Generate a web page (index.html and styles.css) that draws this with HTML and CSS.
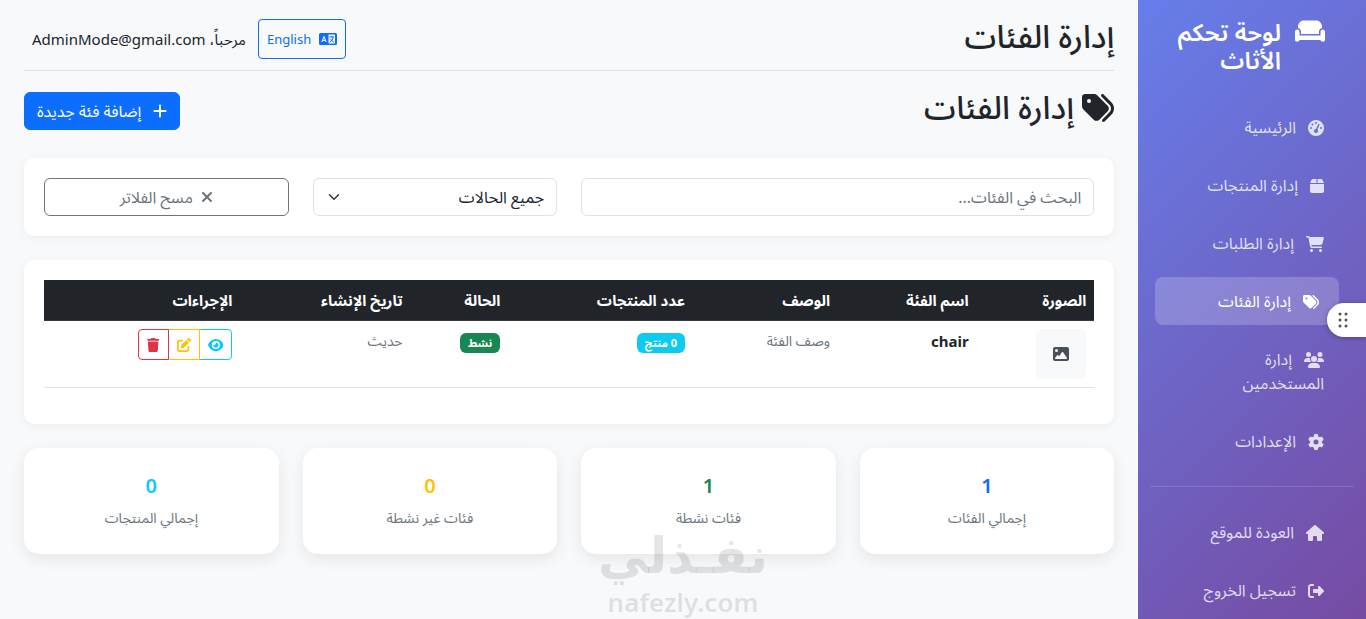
FILE: index.html
```html
<!DOCTYPE html>
<html lang="ar" dir="rtl">
<head>
<meta charset="utf-8">
<meta name="viewport" content="width=device-width, initial-scale=1">
<title>إدارة الفئات</title>
<link rel="stylesheet" href="styles.css">
</head>
<body>
<svg class="sprite" aria-hidden="true">
  <symbol id="tags" viewBox="0 0 512 512"><path d="M345 39.1L472.8 168.4c52.4 53 52.4 138.2 0 191.2L360.8 472.9c-9.3 9.4-24.5 9.5-33.9 .2s-9.5-24.5-.2-33.9L438.6 325.9c33.9-34.3 33.9-89.4 0-123.7L310.9 72.9c-9.3-9.4-9.2-24.6 .2-33.9s24.6-9.2 33.9 .2zM0 229.5V80C0 53.5 21.5 32 48 32H197.5c17 0 33.3 6.7 45.3 18.7l168 168c25 25 25 65.5 0 90.5L277.3 442.7c-25 25-65.5 25-90.5 0l-168-168C6.7 262.7 0 246.5 0 229.5zM144 144a32 32 0 1 0 -64 0 32 32 0 1 0 64 0z"/></symbol>
</svg>
<div class="layout">
  <aside class="sidebar">
    <div class="brand">
      <svg class="brand-icon" viewBox="0 0 640 512" aria-hidden="true"><path d="M64 160C64 89.3 121.3 32 192 32H448c70.7 0 128 57.3 128 128v33.6c-36.5 7.4-64 39.7-64 78.4v48H128V272c0-38.7-27.5-71-64-78.4V160zM544 272c0-20.9 13.4-38.7 32-45.3c5-1.8 10.4-2.7 16-2.7c26.5 0 48 21.5 48 48V448c0 17.7-14.3 32-32 32H576c-17.7 0-32-14.3-32-32H96c0 17.7-14.3 32-32 32H32c-17.7 0-32-14.3-32-32V272c0-26.5 21.5-48 48-48c5.6 0 11 1 16 2.7c18.6 6.6 32 24.4 32 45.3v48 32h32H512h32V320 272z"/></svg>
      <span>لوحة تحكم الأثاث</span>
    </div>
    <nav class="nav">
      <a class="nav-link" href="#"><svg class="icon" viewBox="0 0 512 512" aria-hidden="true"><path d="M0 256a256 256 0 1 1 512 0A256 256 0 1 1 0 256zM288 96a32 32 0 1 0 -64 0 32 32 0 1 0 64 0zM256 416c35.3 0 64-28.7 64-64c0-17.4-6.9-33.1-18.1-44.6L366 161.7c5.3-12.1-.2-26.3-12.3-31.6s-26.3 .2-31.6 12.3L257.9 288c-.6 0-1.3 0-1.9 0c-35.3 0-64 28.7-64 64s28.7 64 64 64zM176 144a32 32 0 1 0 -64 0 32 32 0 1 0 64 0zM96 288a32 32 0 1 0 0-64 32 32 0 1 0 0 64zm352-32a32 32 0 1 0 -64 0 32 32 0 1 0 64 0z"/></svg>الرئيسية</a>
      <a class="nav-link" href="#"><svg class="icon" viewBox="0 0 448 512" aria-hidden="true"><path d="M50.7 58.5L0 160H208V32H93.7C75.5 32 58.9 42.3 50.7 58.5zM240 160H448L397.3 58.5C389.1 42.3 372.5 32 354.3 32H240V160zm208 32H0V416c0 35.3 28.7 64 64 64H384c35.3 0 64-28.7 64-64V192z"/></svg>إدارة المنتجات</a>
      <a class="nav-link" href="#"><svg class="icon" viewBox="0 0 576 512" aria-hidden="true"><path d="M0 24C0 10.7 10.7 0 24 0H69.5c22 0 41.5 12.8 50.6 32h411c26.3 0 45.5 25 38.6 50.4l-41 152.3c-8.5 31.4-37 53.3-69.5 53.3H170.7l5.4 28.5c2.2 11.3 12.1 19.5 23.6 19.5H488c13.3 0 24 10.7 24 24s-10.7 24-24 24H199.7c-34.6 0-64.3-24.6-70.7-58.5L77.4 54.5c-.7-3.8-4-6.5-7.9-6.5H24C10.7 48 0 37.3 0 24zM128 464a48 48 0 1 1 96 0 48 48 0 1 1 -96 0zm336-48a48 48 0 1 1 0 96 48 48 0 1 1 0-96z"/></svg>إدارة الطلبات</a>
      <a class="nav-link active" href="#" aria-current="page"><svg class="icon" viewBox="0 0 512 512" aria-hidden="true"><use href="#tags"/></svg>إدارة الفئات</a>
      <a class="nav-link" href="#"><svg class="icon" viewBox="0 0 640 512" aria-hidden="true"><path d="M144 0a80 80 0 1 1 0 160A80 80 0 1 1 144 0zM512 0a80 80 0 1 1 0 160A80 80 0 1 1 512 0zM0 298.7C0 239.8 47.8 192 106.7 192h42.7c15.9 0 31 3.5 44.6 9.7c-1.3 7.2-1.9 14.7-1.9 22.3c0 38.2 16.8 72.5 43.3 96c-.2 0-.4 0-.7 0H21.3C9.6 320 0 310.4 0 298.7zM405.3 320c-.2 0-.4 0-.7 0c26.6-23.5 43.3-57.8 43.3-96c0-7.6-.7-15-1.9-22.3c13.6-6.3 28.7-9.7 44.6-9.7h42.7C592.2 192 640 239.8 640 298.7c0 11.8-9.6 21.3-21.3 21.3H405.3zM224 224a96 96 0 1 1 192 0 96 96 0 1 1 -192 0zM128 485.3C128 411.7 187.7 352 261.3 352H378.7C452.3 352 512 411.7 512 485.3c0 14.7-11.9 26.7-26.7 26.7H154.7c-14.7 0-26.7-11.9-26.7-26.7z"/></svg>إدارة المستخدمين</a>
      <a class="nav-link" href="#"><svg class="icon" viewBox="0 0 512 512" aria-hidden="true"><path d="M495.9 166.6c3.2 8.7 .5 18.4-6.4 24.6l-43.3 39.4c1.1 8.3 1.7 16.8 1.7 25.4s-.6 17.1-1.7 25.4l43.3 39.4c6.9 6.2 9.6 15.9 6.4 24.6c-4.4 11.9-9.7 23.3-15.8 34.3l-4.7 8.1c-6.6 11-14 21.4-22.1 31.2c-5.9 7.2-15.7 9.6-24.5 6.8l-55.7-17.7c-13.4 10.3-28.2 18.9-44 25.4l-12.5 57.1c-2 9.1-9 16.3-18.2 17.8c-13.8 2.3-28 3.5-42.5 3.5s-28.7-1.2-42.5-3.5c-9.2-1.5-16.2-8.7-18.2-17.8l-12.5-57.1c-15.8-6.5-30.6-15.1-44-25.4L83.1 425.9c-8.8 2.8-18.6 .3-24.5-6.8c-8.1-9.8-15.5-20.2-22.1-31.2l-4.7-8.1c-6.1-11-11.4-22.4-15.8-34.3c-3.2-8.7-.5-18.4 6.4-24.6l43.3-39.4C64.6 273.1 64 264.6 64 256s.6-17.1 1.7-25.4L22.4 191.2c-6.9-6.2-9.6-15.9-6.4-24.6c4.4-11.9 9.7-23.3 15.8-34.3l4.7-8.1c6.6-11 14-21.4 22.1-31.2c5.9-7.2 15.7-9.6 24.5-6.8l55.7 17.7c13.4-10.3 28.2-18.9 44-25.4l12.5-57.1c2-9.1 9-16.3 18.2-17.8C227.3 1.2 241.5 0 256 0s28.7 1.2 42.5 3.5c9.2 1.5 16.2 8.7 18.2 17.8l12.5 57.1c15.8 6.5 30.6 15.1 44 25.4l55.7-17.7c8.8-2.8 18.6-.3 24.5 6.8c8.1 9.8 15.5 20.2 22.1 31.2l4.7 8.1c6.1 11 11.4 22.4 15.8 34.3zM256 336a80 80 0 1 0 0-160 80 80 0 1 0 0 160z"/></svg>الإعدادات</a>
      <hr class="nav-divider">
      <a class="nav-link" href="#"><svg class="icon" viewBox="0 0 576 512" aria-hidden="true"><path d="M575.8 255.5c0 18-15 32.1-32 32.1h-32l.7 160.2c0 2.7-.2 5.4-.5 8.1V472c0 22.1-17.9 40-40 40H456c-1.1 0-2.2 0-3.3-.1c-1.4 .1-2.8 .1-4.2 .1H416 392c-22.1 0-40-17.9-40-40V448 384c0-17.7-14.3-32-32-32H256c-17.7 0-32 14.3-32 32v64 24c0 22.1-17.9 40-40 40H160 128.1c-1.5 0-3-.1-4.5-.2c-1.2 .1-2.4 .2-3.6 .2H104c-22.1 0-40-17.9-40-40V360c0-.9 0-1.9 .1-2.8V287.6H32c-18 0-32-14-32-32.1c0-9 3-17 10-24L266.4 8c7-7 15-8 22-8s15 2 21 7L564.8 231.5c8 7 12 15 11 24z"/></svg>العودة للموقع</a>
      <a class="nav-link" href="#"><svg class="icon" viewBox="0 0 512 512" aria-hidden="true"><path d="M377.9 105.9L500.7 228.7c7.2 7.2 11.3 17.1 11.3 27.3s-4.1 20.1-11.3 27.3L377.9 406.1c-6.4 6.4-15 9.9-24 9.9c-18.7 0-33.9-15.2-33.9-33.9l0-62.1-128 0c-17.7 0-32-14.3-32-32l0-64c0-17.7 14.3-32 32-32l128 0 0-62.1c0-18.7 15.2-33.9 33.9-33.9c9 0 17.6 3.6 24 9.9zM160 96L96 96c-17.7 0-32 14.3-32 32l0 256c0 17.7 14.3 32 32 32l64 0c17.7 0 32 14.3 32 32s-14.3 32-32 32l-64 0c-53 0-96-43-96-96L0 128C0 75 43 32 96 32l64 0c17.7 0 32 14.3 32 32s-14.3 32-32 32z"/></svg>تسجيل الخروج</a>
    </nav>
  </aside>

  <main class="main">
    <header class="topbar">
      <h1 class="title">إدارة الفئات</h1>
      <div class="account">
        <button type="button" class="btn btn-lang">
          <svg class="lang-icon" viewBox="0 0 18 12" aria-hidden="true"><path fill-rule="evenodd" d="M1.5 0H16.5Q18 0 18 1.500V10.500Q18 12 16.500 12H1.500Q0 12 0 10.500V1.500Q0 0 1.500 0zM9.500 1.500V10.500H16V1.500z"/><path class="lang-a" d="M2.800 9L5 3.500L7.200 9M3.600 7.300H6.400"/><path class="lang-z" d="M10.500 4H15M12.800 2.800V4M14.300 4.200Q13.500 7.500 10.700 9M11.500 6Q12.800 8.200 14.900 9"/></svg>
          <span>English</span>
        </button>
        <span class="welcome">مرحباً، AdminMode@gmail.com</span>
      </div>
    </header>

    <div class="page-head">
      <h2 class="title"><svg class="icon" viewBox="0 0 512 512" aria-hidden="true"><use href="#tags"/></svg> إدارة الفئات</h2>
      <button type="button" class="btn btn-primary"><svg class="icon" viewBox="0 0 448 512" aria-hidden="true"><path d="M256 80c0-17.700-14.300-32-32-32s-32 14.300-32 32V224H48c-17.700 0-32 14.300-32 32s14.300 32 32 32H192V432c0 17.700 14.300 32 32 32s32-14.300 32-32V288H400c17.700 0 32-14.300 32-32s-14.300-32-32-32H256V80z"/></svg><span>إضافة فئة جديدة</span></button>
    </div>

    <form class="card filters">
      <input class="field" type="text" placeholder="البحث في الفئات..." aria-label="البحث في الفئات">
      <div class="select-wrap">
        <select class="field" aria-label="الحالة"><option>جميع الحالات</option></select>
        <svg class="chevron" viewBox="0 0 16 16" aria-hidden="true"><path d="m2 5 6 6 6-6"/></svg>
      </div>
      <button type="reset" class="btn btn-clear"><svg class="icon" viewBox="0 0 384 512" aria-hidden="true"><path d="M342.600 150.600c12.500-12.500 12.500-32.800 0-45.300s-32.800-12.500-45.300 0L192 210.700 86.600 105.400c-12.500-12.500-32.800-12.500-45.300 0s-12.500 32.800 0 45.300L146.700 256 41.400 361.400c-12.500 12.500-12.500 32.800 0 45.300s32.800 12.500 45.300 0L192 301.300 297.400 406.600c12.500 12.500 32.800 12.500 45.300 0s12.500-32.800 0-45.300L237.300 256 342.600 150.600z"/></svg><span>مسح الفلاتر</span></button>
    </form>

    <section class="card table-card">
      <table class="table">
        <colgroup><col class="c-image"><col class="c-name"><col class="c-desc"><col class="c-count"><col class="c-status"><col class="c-date"><col></colgroup>
        <thead>
          <tr><th>الصورة</th><th>اسم الفئة</th><th>الوصف</th><th>عدد المنتجات</th><th>الحالة</th><th>تاريخ الإنشاء</th><th>الإجراءات</th></tr>
        </thead>
        <tbody>
          <tr>
            <td><div class="thumb"><svg class="icon" viewBox="0 0 512 512" aria-hidden="true"><path d="M0 96C0 60.700 28.700 32 64 32H448c35.300 0 64 28.700 64 64V416c0 35.300-28.700 64-64 64H64c-35.300 0-64-28.700-64-64V96zM323.800 202.500c-4.500-6.600-11.900-10.500-19.800-10.500s-15.400 3.900-19.800 10.500l-87 127.600L170.700 297c-4.600-5.700-11.500-9-18.700-9s-14.200 3.300-18.700 9l-64 80c-5.800 7.200-6.900 17.100-2.900 25.400s12.400 13.600 21.600 13.600h96 32H424c8.900 0 17.100-4.900 21.200-12.800s3.600-17.400-1.400-24.700l-120-176zM112 192a48 48 0 1 0 0-96 48 48 0 1 0 0 96z"/></svg></div></td>
            <td><strong class="name">chair</strong></td>
            <td class="muted">وصف الفئة</td>
            <td><span class="badge badge-info">0 منتج</span></td>
            <td><span class="badge badge-success">نشط</span></td>
            <td class="muted">حديث</td>
            <td>
              <div class="actions">
                <button type="button" class="action view" aria-label="عرض"><svg class="icon" viewBox="0 0 576 512"><path d="M288 32c-80.800 0-145.500 36.800-192.600 80.600C48.600 156 17.300 208 2.500 243.700c-3.300 7.900-3.300 16.700 0 24.600C17.300 304 48.600 356 95.400 399.400C142.500 443.200 207.200 480 288 480s145.500-36.800 192.600-80.600c46.800-43.500 78.100-95.400 93-131.100c3.300-7.900 3.300-16.700 0-24.600c-14.900-35.700-46.200-87.700-93-131.100C433.500 68.800 368.800 32 288 32zM144 256a144 144 0 1 1 288 0 144 144 0 1 1 -288 0zm144-64c0 35.300-28.700 64-64 64c-7.100 0-13.900-1.200-20.300-3.300c-5.500-1.800-11.900 1.600-11.700 7.400c.3 6.900 1.300 13.800 3.200 20.700c13.700 51.200 66.400 81.600 117.600 67.900s81.600-66.400 67.900-117.600c-11.100-41.500-47.800-69.400-88.600-71.100c-5.800-.2-9.200 6.100-7.400 11.700c2.100 6.400 3.300 13.200 3.300 20.300z"/></svg></button>
                <button type="button" class="action edit" aria-label="تعديل"><svg class="icon" viewBox="0 0 512 512"><path d="M471.600 21.700c-21.900-21.900-57.300-21.900-79.200 0L362.300 51.700l97.900 97.900 30.100-30.100c21.900-21.900 21.900-57.300 0-79.200L471.600 21.700zm-299.200 220c-6.100 6.100-10.800 13.600-13.500 21.900l-29.600 88.800c-2.900 8.600-.6 18.100 5.800 24.600s15.900 8.700 24.600 5.800l88.800-29.600c8.200-2.700 15.700-7.400 21.900-13.500L437.700 172.300 339.700 74.300 172.400 241.700zM96 64C43 64 0 107 0 160V416c0 53 43 96 96 96H352c53 0 96-43 96-96V320c0-17.700-14.300-32-32-32s-32 14.300-32 32v96c0 17.700-14.300 32-32 32H96c-17.700 0-32-14.300-32-32V160c0-17.700 14.300-32 32-32h96c17.700 0 32-14.300 32-32s-14.300-32-32-32H96z"/></svg></button>
                <button type="button" class="action delete" aria-label="حذف"><svg class="icon" viewBox="0 0 448 512"><path d="M135.200 17.700L128 32H32C14.300 32 0 46.300 0 64S14.300 96 32 96H416c17.700 0 32-14.300 32-32s-14.300-32-32-32H320l-7.200-14.300C307.400 6.800 296.300 0 284.200 0H163.800c-12.100 0-23.200 6.800-28.600 17.700zM416 128H32L53.200 467c1.600 25.300 22.600 45 47.900 45H346.900c25.300 0 46.300-19.700 47.900-45L416 128z"/></svg></button>
              </div>
            </td>
          </tr>
        </tbody>
      </table>
    </section>

    <section class="stats">
      <div class="stat"><strong class="stat-value blue">1</strong><span class="muted">إجمالي الفئات</span></div>
      <div class="stat"><strong class="stat-value green">1</strong><span class="muted">فئات نشطة</span></div>
      <div class="stat"><strong class="stat-value yellow">0</strong><span class="muted">فئات غير نشطة</span></div>
      <div class="stat"><strong class="stat-value cyan">0</strong><span class="muted">إجمالي المنتجات</span></div>
    </section>
  </main>
</div>

<button type="button" class="drag-handle" aria-label="لوحة جانبية"><svg viewBox="0 0 10 16" aria-hidden="true"><circle cx="2" cy="2" r="1.500"/><circle cx="8" cy="2" r="1.500"/><circle cx="2" cy="8" r="1.500"/><circle cx="8" cy="8" r="1.500"/><circle cx="2" cy="14" r="1.500"/><circle cx="8" cy="14" r="1.500"/></svg></button>

<div class="watermark"><span class="wm-ar">نفـذلي</span><span class="wm-en">nafezly.com</span></div>
</body>
</html>
```
FILE: styles.css
```css
* { box-sizing: border-box; }
body {
  margin: 0;
  background: #f8f9fa;
  color: #212529;
  font-family: "Noto Sans", "Noto Sans Arabic", "DejaVu Sans", sans-serif;
  font-size: 16px;
  line-height: 24px;
}
button, input, select { font: inherit; }
h1, h2 { margin: 0; }
.sprite { position: absolute; width: 0; height: 0; }
.icon { height: 1em; width: auto; fill: currentColor; vertical-align: -2px; }
.layout { display: grid; grid-template-columns: 1fr 5fr; min-height: 100vh; }

/* Sidebar */
.sidebar {
  padding: 16px 12px 0;
  background: linear-gradient(135deg, #667eea 0%, #764ba2 100%);
}
.brand {
  display: flex;
  align-items: flex-start;
  gap: 14px;
  padding: 2px 29px 19px 12px;
  color: #fff;
  font-size: 24px;
  font-weight: 600;
  line-height: 28px;
}
.brand-icon { width: 30px; height: 26px; flex: none; fill: #fff; }
.nav { display: flow-root; margin-top: -10px; padding-top: 10px; }
.nav-link {
  display: block;
  margin: 10px 10px 0;
  padding: 12px 20px;
  border-radius: 8px;
  color: rgba(255, 255, 255, .8);
  text-decoration: none;
}
.nav-link:first-child { margin-top: 10px; }
.nav-link .icon { margin-left: 12px; vertical-align: -3px; }
.nav-link.active { background: rgba(255, 255, 255, .2); color: #fff; transform: translateX(-5px); }
.nav-divider { border: 0; border-top: 1px solid rgba(255, 255, 255, .15); margin: 21px 0; }

/* Main column */
.main { padding: 16px 24px; }
.topbar, .page-head { display: flex; justify-content: space-between; align-items: flex-start; }
.topbar { padding: 3px 0 11px; border-bottom: 1px solid #dee2e6; }
.title { font-size: 32px; font-weight: 500; line-height: 34px; }
.title .icon { vertical-align: -5px; }
.account { display: flex; align-items: center; gap: 12px; }
.welcome { padding-left: 8px; font-size: 15px; }
.btn {
  display: inline-flex;
  align-items: center;
  justify-content: center;
  border: 1px solid;
  border-radius: 6px;
  cursor: pointer;
}
.btn-lang {
  gap: 8px;
  padding: 0 8px;
  height: 40px;
  background: none;
  color: #0d6efd;
  border-color: #0d6efd;
  border-radius: 4px;
  font-size: 13px;
}
.lang-icon { width: 18px; height: 12px; fill: currentColor; }
.lang-a, .lang-z { fill: none; stroke-width: 1; }
.lang-a { stroke: #fff; }
.lang-z { stroke: #0d6efd; }
.page-head { padding: 18px 0 28px; }
.page-head .title { padding-top: 1px; }
.page-head .btn { margin-top: 3px; }
.btn-primary { gap: 12px; padding: 6px 12px; color: #fff; background: #0d6efd; border-color: #0d6efd; }
.card {
  padding: 20px;
  margin-bottom: 24px;
  background: #fff;
  border-radius: 10px;
  box-shadow: 0 2px 10px rgba(0, 0, 0, .05);
}
.filters { display: grid; grid-template-columns: repeat(12, 1fr); gap: 24px; }
.filters > * { grid-column: span 3; }
.filters > input { grid-column: span 6; }
.field {
  width: 100%;
  height: 38px;
  padding: 6px 12px;
  color: #212529;
  background: #fff;
  border: 1px solid #dee2e6;
  border-radius: 6px;
  appearance: none;
}
.field::placeholder { color: #6c757d; opacity: 1; }
.select-wrap { position: relative; }
.chevron {
  position: absolute;
  left: 15px;
  top: 13px;
  width: 12px;
  height: 12px;
  fill: none;
  stroke: #343a40;
  stroke-width: 2;
  stroke-linecap: round;
  stroke-linejoin: round;
  pointer-events: none;
}
.btn-clear { gap: 8px; color: #6c757d; background: #fff; border-color: #6c757d; }

/* Table */
.table-card { padding-bottom: 36px; }
.table { width: 100%; table-layout: fixed; border-collapse: collapse; text-align: right; }
.table th { padding: 8px; color: #fff; background: #212529; border-bottom: 1px solid #373b3e; font-size: 15px; text-align: right; white-space: nowrap; }
.table td { padding: 8px; vertical-align: top; border-bottom: 1px solid #dee2e6; }
.c-image { width: 11.2%; }
.c-name { width: 13.2%; }
.c-desc { width: 13.8%; }
.c-count { width: 17.6%; }
.c-status { width: 9.3%; }
.c-date { width: 16.2%; }
.name { font-size: 15px; }
.thumb { display: flex; align-items: center; justify-content: center; width: 50px; height: 50px; background: #f8f9fa; border-radius: 5px; color: #495057; }
.muted { color: #6c757d; font-size: 14px; }
.badge { display: inline-block; padding: 4px 8px; border-radius: 6px; color: #fff; font-size: 11px; font-weight: 700; line-height: 12px; }
.badge-info { background: #0dcaf0; }
.badge-success { background: #198754; }
.actions { display: inline-flex; }
.action { height: 31px; padding: 3px 8px; background: #fff; border: 1px solid; font-size: 14px; line-height: 20px; }
.action + .action { margin-right: -1px; }
.view { color: #0dcaf0; border-radius: 0 4px 4px 0; }
.edit { color: #ffc107; }
.delete { color: #dc3545; border-radius: 4px 0 0 4px; }

/* Stat cards */
.stats { display: grid; grid-template-columns: repeat(4, 1fr); gap: 24px; }
.stat {
  display: flex;
  flex-direction: column;
  align-items: center;
  gap: 8px;
  padding: 26px 20px 24px;
  background: #fff;
  border-radius: 15px;
  box-shadow: 0 5px 15px rgba(0, 0, 0, .08);
}
.stat-value { font-size: 20px; font-weight: 600; line-height: 24px; }
.blue { color: #0d6efd; }
.green { color: #198754; }
.yellow { color: #ffc107; }
.cyan { color: #0dcaf0; }

/* Overlays */
.drag-handle {
  position: fixed;
  right: 0;
  top: 303px;
  display: flex;
  align-items: center;
  width: 39px;
  height: 34px;
  padding: 0 18px 0 11px;
  border: 0;
  border-radius: 17px 0 0 17px;
  background: #fff;
  box-shadow: 0 1px 5px rgba(0, 0, 0, .3);
}
.drag-handle svg { width: 10px; height: 16px; fill: #555; }
.watermark {
  position: fixed;
  left: 50%;
  bottom: 0;
  transform: translateX(-50%);
  display: flex;
  flex-direction: column;
  align-items: center;
  color: rgba(0, 0, 0, .1);
  font-weight: 700;
  pointer-events: none;
}
.wm-ar { font-family: "DejaVu Sans", sans-serif; font-size: 50px; line-height: 58px; }
.wm-en { font-family: "Noto Sans", sans-serif; font-size: 26px; font-weight: 600; line-height: 34px; }
```
